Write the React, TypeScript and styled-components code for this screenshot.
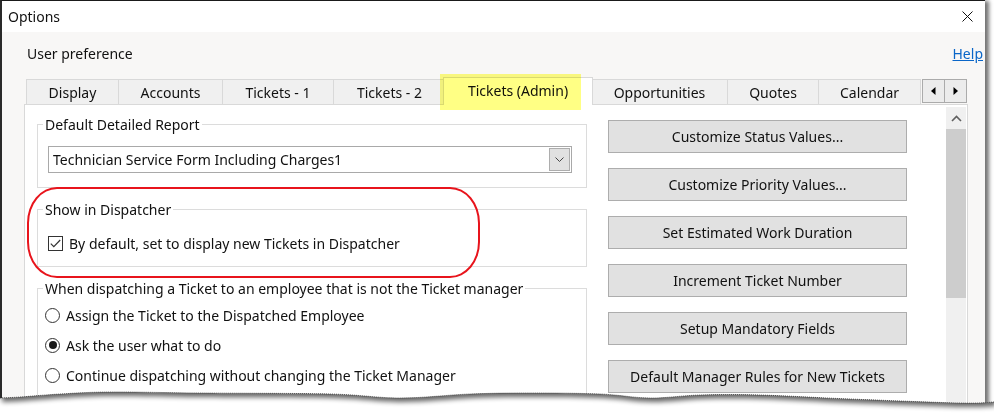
import React from "react";
import styled, { createGlobalStyle } from "styled-components";

const GlobalStyle = createGlobalStyle`
  html, body {
    margin: 0;
    padding: 0;
    background: #ffffff;
  }
  * {
    box-sizing: border-box;
  }
`;

const FONT = `"Noto Sans", "Open Sans", sans-serif`;

const Stage = styled.div`
  position: relative;
  width: 994px;
  height: 418px;
  overflow: hidden;
  background: #ffffff;
  font-family: ${FONT};
  font-size: 14px;
  color: #111;
`;

const Window = styled.div`
  width: 985px;
  height: 430px;
  border-top: 1px solid #1a1a1a;
  border-left: 2px solid #2a2a2a;
  background: #f8f7f6;
  box-shadow: 5px 0 4px -1px rgba(0, 0, 0, 0.55);
  display: flex;
  flex-direction: column;
`;

const TitleBar = styled.div`
  height: 31px;
  flex: none;
  background: #ffffff;
  display: flex;
  align-items: center;
  justify-content: space-between;
  padding: 0 12px 0 6px;
`;

const Title = styled.span`
  font-size: 14px;
  line-height: 19px;
`;

const CloseIcon = () => (
  <svg width="11" height="11" viewBox="0 0 11 11">
    <path d="M0.5 0.5 L10.5 10.5 M10.5 0.5 L0.5 10.5" stroke="#111" strokeWidth="1" />
  </svg>
);

const Header = styled.div`
  height: 47px;
  flex: none;
  display: flex;
  justify-content: space-between;
  align-items: flex-start;
  padding: 12px 2px 0 25px;
  line-height: 19px;
`;

const HelpLink = styled.a`
  color: #0a66c8;
  text-decoration: underline;
  cursor: pointer;
`;

const TabRow = styled.div`
  position: relative;
  z-index: 2;
  height: 25px;
  flex: none;
  display: flex;
  align-items: flex-start;
  margin-left: 24px;
`;

const Tab = styled.div<{ $w: number; $active?: boolean; $last?: boolean }>`
  width: ${(p) => p.$w}px;
  height: ${(p) => (p.$active ? 28 : 25)}px;
  margin: ${(p) => (p.$active ? "-2px -2px 0" : "0")};
  display: flex;
  align-items: center;
  justify-content: center;
  padding-top: ${(p) => (p.$active ? 0 : 1)}px;
  padding-bottom: ${(p) => (p.$active ? 3 : 0)}px;
  background: ${(p) => (p.$active ? "#ffffff" : "#f0f0f0")};
  border-top: 1px solid #d9d9d9;
  border-left: 1px solid #d9d9d9;
  border-right: ${(p) => (p.$active || p.$last ? "1px solid #d9d9d9" : "none")};
  position: relative;
  z-index: ${(p) => (p.$active ? 2 : 1)};
  white-space: nowrap;
  line-height: 19px;
`;

const TabArrows = styled.div`
  display: flex;
  margin-left: 2px;
  height: 24px;
`;

const ArrowButton = styled.div<{ $w: number }>`
  width: ${(p) => p.$w}px;
  height: 24px;
  background: #ececec;
  border: 1px solid #ababab;
  margin-left: -1px;
  display: flex;
  align-items: center;
  justify-content: center;
`;

const Panel = styled.div`
  margin-left: 22px;
  width: 944px;
  flex: 1;
  background: #ffffff;
  border: 1px solid #d9d9d9;
  display: flex;
  align-items: flex-start;
`;

const LeftColumn = styled.div`
  width: 550px;
  margin: 10px 0 0 12px;
  display: flex;
  flex-direction: column;
`;

const Group = styled.fieldset<{ $pad: number }>`
  margin: 0 0 12px;
  padding: 0 0 ${(p) => p.$pad}px 5px;
  border: 1px solid #dcdcdc;
  min-width: 0;
`;

const Legend = styled.legend`
  padding: 0 2px;
  line-height: 19px;
  font-size: 14px;
`;

const Combo = styled.div`
  margin: 12px 0 0 5px;
  width: 524px;
  height: 27px;
  border: 1px solid #a9a9a9;
  background: #ffffff;
  display: flex;
  align-items: center;
  justify-content: space-between;
  padding: 0 1px 0 4px;
`;

const ComboButton = styled.div`
  width: 21px;
  height: 23px;
  background: #e1e1e1;
  border: 1px solid #adadad;
  display: flex;
  align-items: center;
  justify-content: center;
`;

const OptionRow = styled.label<{ $indent: number; $top: number }>`
  display: flex;
  align-items: center;
  gap: 6px;
  height: 20px;
  margin: ${(p) => p.$top}px 0 0 ${(p) => p.$indent}px;
  line-height: 19px;
  white-space: nowrap;
`;

const CheckBox = styled.span`
  width: 15px;
  height: 15px;
  border: 1px solid #333;
  background: #fff;
  display: flex;
  align-items: center;
  justify-content: center;
  flex: none;
`;

const Radio = styled.span<{ $on?: boolean }>`
  width: 15px;
  height: 15px;
  border: 1px solid #333;
  border-radius: 50%;
  background: #fff;
  display: flex;
  align-items: center;
  justify-content: center;
  flex: none;
  &::after {
    content: "";
    display: ${(p) => (p.$on ? "block" : "none")};
    width: 8px;
    height: 8px;
    border-radius: 50%;
    background: #1a1a1a;
  }
`;

const RightColumn = styled.div`
  width: 299px;
  margin: 15px 0 0 21px;
  display: flex;
  flex-direction: column;
  gap: 15px;
`;

const ActionButton = styled.div`
  height: 33px;
  background: #e1e1e1;
  border: 1px solid #adadad;
  display: flex;
  align-items: center;
  justify-content: center;
  line-height: 19px;
  white-space: nowrap;
`;

const ScrollBar = styled.div`
  margin: 2px 1px 0 auto;
  width: 20px;
  align-self: stretch;
  background: #f0f0f0;
  display: flex;
  flex-direction: column;
`;

const ScrollArrow = styled.div`
  height: 22px;
  display: flex;
  align-items: center;
  justify-content: center;
`;

const ScrollThumb = styled.div`
  height: 169px;
  background: #cdcdcd;
`;

const Highlight = styled.div`
  position: absolute;
  left: 440px;
  top: 74px;
  width: 141px;
  height: 36px;
  background: #ffff5a;
  mix-blend-mode: multiply;
  opacity: 0.75;
  pointer-events: none;
  z-index: 5;
`;

const Annotation = styled.div`
  position: absolute;
  left: 27px;
  top: 187px;
  width: 453px;
  height: 91px;
  border: 2px solid #e8141c;
  border-radius: 30px / 36px;
  pointer-events: none;
  z-index: 5;
`;

const TornEdge = styled.svg`
  position: absolute;
  left: 0;
  top: 380px;
  z-index: 6;
`;

const edgePoints: [number, number][] = [
  [0, 18], [20, 17], [60, 14], [110, 12], [200, 13], [330, 14], [400, 18],
  [470, 14], [530, 13], [600, 14], [650, 18], [700, 15], [760, 15],
  [850, 19], [960, 23], [994, 22],
];

function smoothPath(pts: [number, number][]) {
  let d = `M${pts[0][0]} ${pts[0][1]}`;
  for (let i = 0; i < pts.length - 1; i++) {
    const p0 = pts[i - 1] || pts[i];
    const p1 = pts[i];
    const p2 = pts[i + 1];
    const p3 = pts[i + 2] || p2;
    const c1x = p1[0] + (p2[0] - p0[0]) / 6;
    const c1y = p1[1] + (p2[1] - p0[1]) / 6;
    const c2x = p2[0] - (p3[0] - p1[0]) / 6;
    const c2y = p2[1] - (p3[1] - p1[1]) / 6;
    d += ` C${c1x} ${c1y} ${c2x} ${c2y} ${p2[0]} ${p2[1]}`;
  }
  return d;
}

const edge = smoothPath(edgePoints);

const TornBottom = () => (
  <TornEdge width="994" height="38" viewBox="0 0 994 38">
    <defs>
      <filter id="tear-blur" x="-5%" y="-50%" width="110%" height="200%">
        <feGaussianBlur stdDeviation="2.6" />
      </filter>
      <clipPath id="tear-below">
        <path d={`${edge} L994 38 L0 38 Z`} />
      </clipPath>
    </defs>
    <g clipPath="url(#tear-below)">
      <rect x="0" y="0" width="994" height="38" fill="#ffffff" />
      <path
        d={`${edge} L994 -20 L0 -20 Z`}
        transform="translate(2 4)"
        fill="#000"
        opacity="0.6"
        filter="url(#tear-blur)"
      />
    </g>
    <path d={edge} stroke="#333" strokeWidth="0.8" strokeDasharray="1 1" fill="none" />
  </TornEdge>
);

const tabs = [
  { label: "Display", w: 92 },
  { label: "Accounts", w: 104 },
  { label: "Tickets - 1", w: 111 },
  { label: "Tickets - 2", w: 112 },
  { label: "Tickets (Admin)", w: 150, active: true },
  { label: "Opportunities", w: 136 },
  { label: "Quotes", w: 91 },
  { label: "Calendar", w: 103, last: true },
];

const actions = [
  "Customize Status Values...",
  "Customize Priority Values...",
  "Set Estimated Work Duration",
  "Increment Ticket Number",
  "Setup Mandatory Fields",
  "Default Manager Rules for New Tickets",
];

export default function App() {
  return (
    <Stage>
      <GlobalStyle />
      <Window>
        <TitleBar>
          <Title>Options</Title>
          <CloseIcon />
        </TitleBar>
        <Header>
          <span>User preference</span>
          <HelpLink>Help</HelpLink>
        </Header>
        <TabRow>
          {tabs.map((t) => (
            <Tab key={t.label} $w={t.w} $active={t.active} $last={t.last}>
              {t.label}
            </Tab>
          ))}
          <TabArrows>
            <ArrowButton $w={23}>
              <svg width="5" height="8" viewBox="0 0 5 8">
                <path d="M4.5 0 L0 4 L4.5 8 Z" fill="#000" />
              </svg>
            </ArrowButton>
            <ArrowButton $w={23}>
              <svg width="5" height="8" viewBox="0 0 5 8">
                <path d="M0.5 0 L5 4 L0.5 8 Z" fill="#000" />
              </svg>
            </ArrowButton>
          </TabArrows>
        </TabRow>
        <Panel>
          <LeftColumn>
            <Group $pad={14}>
              <Legend>Default Detailed Report</Legend>
              <Combo>
                <span>Technician Service Form Including Charges1</span>
                <ComboButton>
                  <svg width="9" height="5" viewBox="0 0 9 5">
                    <path d="M0.5 0.5 L4.5 4.5 L8.5 0.5" stroke="#444" strokeWidth="1" fill="none" />
                  </svg>
                </ComboButton>
              </Combo>
            </Group>
            <Group $pad={13}>
              <Legend>Show in Dispatcher</Legend>
              <OptionRow $indent={5} $top={14}>
                <CheckBox>
                  <svg width="11" height="9" viewBox="0 0 11 9">
                    <path d="M0.8 4.6 L3.8 7.6 L10.2 1" stroke="#333" strokeWidth="1.2" fill="none" />
                  </svg>
                </CheckBox>
                By default, set to display new Tickets in Dispatcher
              </OptionRow>
            </Group>
            <Group $pad={20}>
              <Legend>When dispatching a Ticket to an employee that is not the Ticket manager</Legend>
              <OptionRow $indent={2} $top={7}>
                <Radio />
                Assign the Ticket to the Dispatched Employee
              </OptionRow>
              <OptionRow $indent={2} $top={10}>
                <Radio $on />
                Ask the user what to do
              </OptionRow>
              <OptionRow $indent={2} $top={10}>
                <Radio />
                Continue dispatching without changing the Ticket Manager
              </OptionRow>
            </Group>
          </LeftColumn>
          <RightColumn>
            {actions.map((a) => (
              <ActionButton key={a}>{a}</ActionButton>
            ))}
          </RightColumn>
          <ScrollBar>
            <ScrollArrow>
              <svg width="11" height="7" viewBox="0 0 11 7">
                <path d="M1 6 L5.5 1.5 L10 6" stroke="#606060" strokeWidth="1.6" fill="none" />
              </svg>
            </ScrollArrow>
            <ScrollThumb />
          </ScrollBar>
        </Panel>
      </Window>
      <Highlight />
      <Annotation />
      <TornBottom />
    </Stage>
  );
}
